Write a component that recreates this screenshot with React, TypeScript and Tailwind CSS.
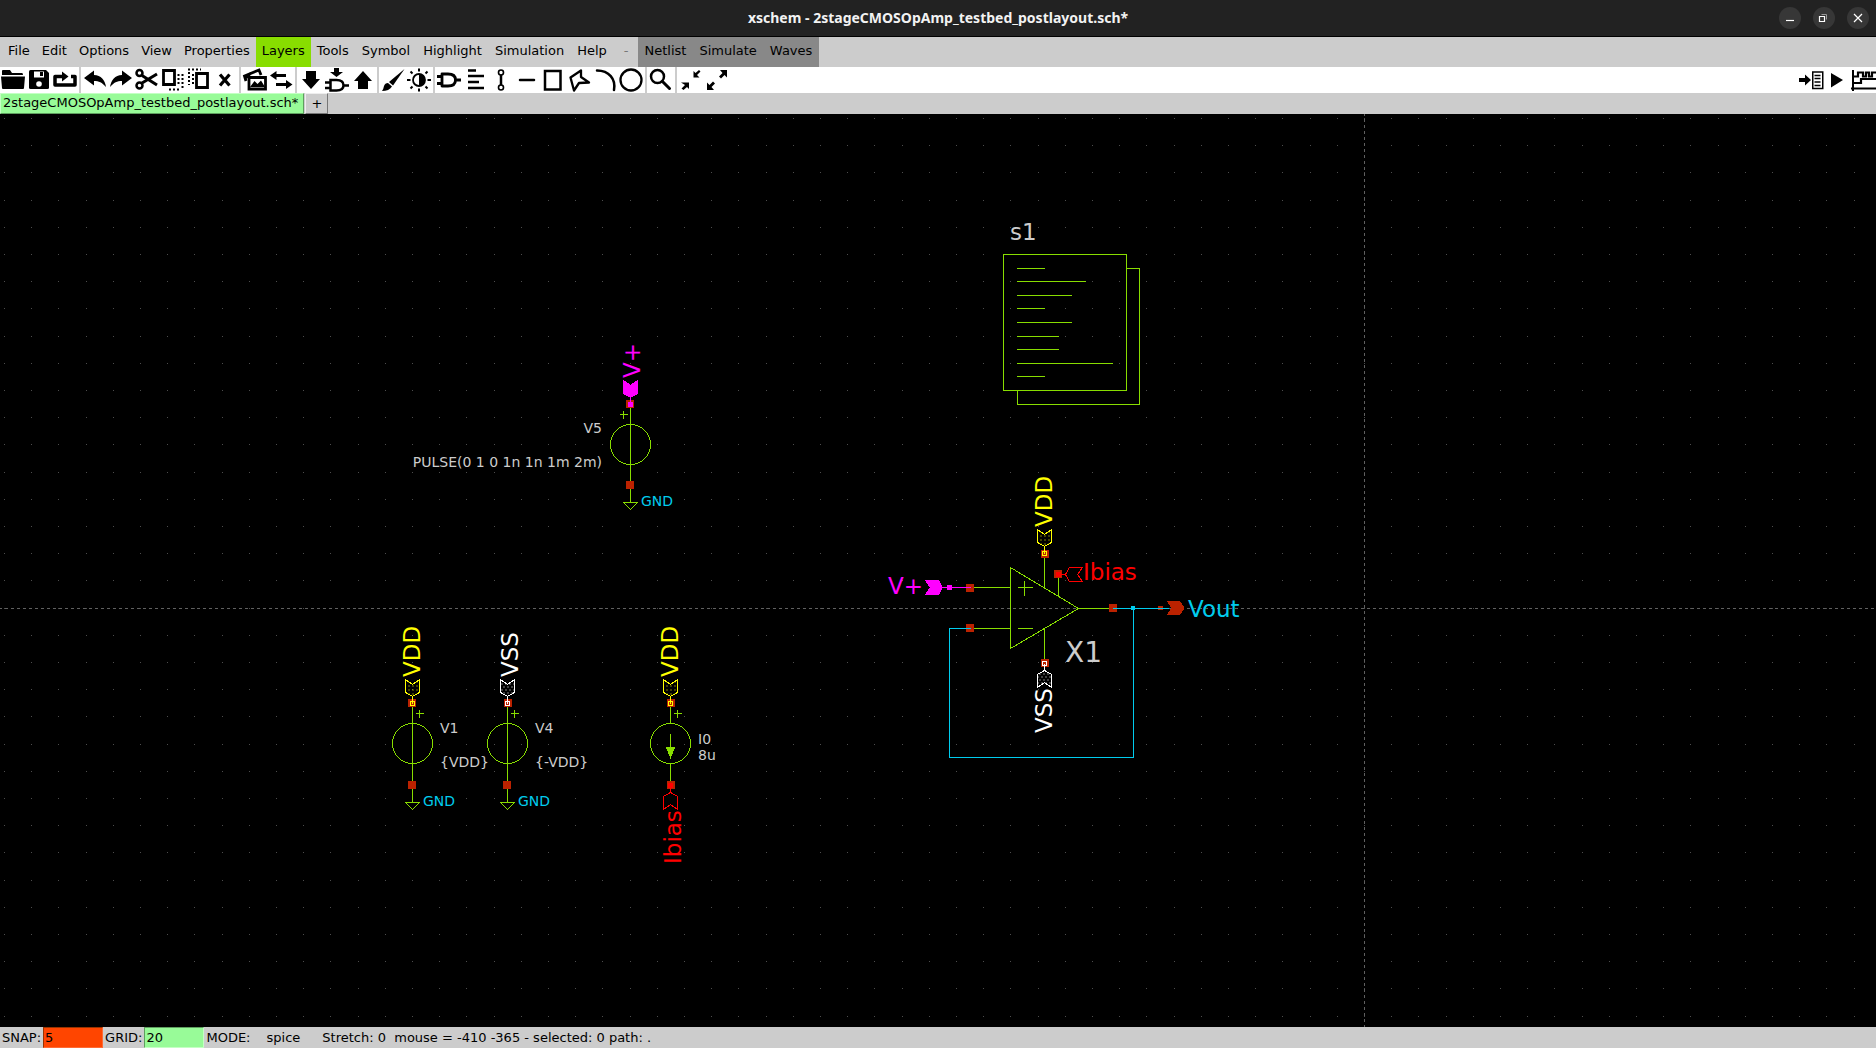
import React from "react";

const GREEN = "#88dd00";
const CYAN = "#00ccee";
const PIN = "#bb2200";
const MAGENTA = "#ff00ff";
const YELLOW = "#ffff00";
const TEXT = "#cccccc";

function Icon({ label, children }: { label: string; children: React.ReactNode }) {
  return (
    <button type="button" aria-label={label} className="h-[26px] w-[26px] shrink-0">
      <svg width="26" height="26" viewBox="0 0 26 26" fill="none" stroke="#000" strokeWidth="2.5">
        {children}
      </svg>
    </button>
  );
}

function Group({ children }: { children: React.ReactNode }) {
  return <div className="flex shrink-0 bg-white pr-px pl-px">{children}</div>;
}

const solid = { fill: "#000", stroke: "none" };

function Toolbar() {
  return (
    <div className="flex h-[26px] gap-0.5 overflow-hidden bg-[#cccccc]">
      <div className="flex shrink-0 bg-white pr-px">
        <Icon label="Open">
          <path {...solid} d="M2 8V4q0-1 1-1h7l2 3h10q1 0 1 2z M1 9.500h24l-1 11.500q0 1-1 1H3q-1 0-1-1z" />
        </Icon>
        <Icon label="Save">
          <path {...solid} d="M3 4.500Q3 3 4.500 3H20l3 3v14.500q0 1.500-1.500 1.500h-17Q3 22 3 20.500z" />
          <path fill="#fff" stroke="none" d="M8 4.500h10v6H8z" />
          <path {...solid} d="M14 5h3v4h-3z" />
          <circle cx="13" cy="17" r="2.800" fill="#fff" stroke="none" />
        </Icon>
        <Icon label="Reload">
          <path strokeWidth="3.500" strokeLinejoin="round" d="M12 9.500H3V18H23V9.500H19" />
          <path {...solid} d="M10 4.500L16.500 9.500L10 14.500z" />
        </Icon>
      </div>
      <Group>
        <Icon label="Undo">
          <path {...solid} d="M2 11L12 3.500V8C19 8 23 13 24 20C20 15.500 17 14 12 14v4.500z" />
        </Icon>
        <Icon label="Redo">
          <path {...solid} d="M24 11L14 3.500V8C7 8 3 13 2 20C6 15.500 9 14 14 14v4.500z" />
        </Icon>
        <Icon label="Cut">
          <circle cx="5.500" cy="6" r="3" />
          <circle cx="5.500" cy="18.500" r="3" />
          <path strokeWidth="3" d="M8 8.500L23 18M8 16L23 7" />
        </Icon>
        <Icon label="Copy">
          <path strokeWidth="2.800" d="M3.500 3.500h11v14h-11z" />
          <path strokeWidth="2" strokeDasharray="2 2" d="M18.500 7v11M22.500 7v16M9 22.500h12" />
        </Icon>
        <Icon label="Paste">
          <path strokeWidth="2.800" d="M10.500 6.500h11v14h-11z" />
          <path strokeWidth="2" strokeDasharray="2 2" d="M2 2.500h13M3 5v13M7 7v11" />
        </Icon>
        <Icon label="Delete">
          <path strokeWidth="3.200" d="M8 7.500l9.500 11M17.500 7.500L8 18.500" />
        </Icon>
      </Group>
      <Group>
        <Icon label="Merge">
          <path strokeWidth="2.800" d="M7 10.500h16.500v11.500H7z" />
          <path {...solid} d="M8 20l4.500-6 3 3 3.500-3.500L23 20z" />
          <path strokeWidth="2.800" d="M4 14L2.500 9L17 3L19 8" />
          <path {...solid} d="M2 9L9 5L8 10L4 12z" />
        </Icon>
        <Icon label="Swap">
          <path strokeWidth="3" d="M7 8.500h11M8 17.500h12" />
          <path {...solid} d="M2 8.500L8.500 4v9zM24.500 17.500L18 13v9z" />
        </Icon>
      </Group>
      <Group>
        <Icon label="Descend">
          <path {...solid} d="M8 4h10v8h4l-9 10-9-10h4z" />
        </Icon>
        <Icon label="Descend symbol">
          <path {...solid} d="M10 1h5v4h4l-6.500 5L6 5h4z" />
          <path strokeWidth="2.500" d="M6.500 13v10.500h6q7 0 7-5.250t-7-5.250zM1 15.500h5M1 21h5M20 18.500h5" />
        </Icon>
        <Icon label="Ascend">
          <path {...solid} d="M8 22h10v-8h4L13 4l-9 10h4z" />
        </Icon>
      </Group>
      <Group>
        <Icon label="Change color">
          <path {...solid} d="M24.500 2L13 18.500L9 15z" />
          <path {...solid} d="M8 16l4 3.500Q9 24 2 24Q3.500 22 4 19Q5 16 8 16z" />
        </Icon>
        <Icon label="Brightness">
          <circle cx="13" cy="13" r="6" strokeWidth="1.800" />
          <path {...solid} d="M13 7a6 6 0 0 1 0 12z" />
          <path
            strokeWidth="2"
            d="M13 1.500v3M13 21.500v3M1 13h3.500M21.500 13H25M4.500 4.500l2 2M19.500 19.500l2 2M4.500 21.500l2-2M19.500 6.500l2-2"
          />
        </Icon>
      </Group>
      <Group>
        <Icon label="Insert symbol">
          <path strokeWidth="2.800" strokeLinejoin="round" d="M6 7v12h6q7.500 0 7.500-6t-7.500-6zM1 9.500h5M1 16.500h5M20 13h5" />
        </Icon>
        <Icon label="Insert text">
          <path strokeWidth="2.500" d="M6 3.500h8M6 9h16M6 15h11M6 21h16" />
        </Icon>
        <Icon label="Insert wire">
          <circle cx="13" cy="5.500" r="2.500" strokeWidth="1.600" />
          <circle cx="13" cy="20.500" r="2.500" strokeWidth="1.600" />
          <path strokeWidth="2.500" d="M13 8v10" />
        </Icon>
        <Icon label="Insert line">
          <path strokeWidth="2.500" d="M6 13h14" strokeLinecap="round" />
        </Icon>
        <Icon label="Insert rectangle">
          <path strokeWidth="2.500" d="M5 4h15.500v18.500H5z" />
        </Icon>
        <Icon label="Insert polygon">
          <path strokeWidth="2.300" strokeLinejoin="round" d="M4.500 10.500L15 3.500L15 10L23 15.500L13 16L8 23.500z" />
        </Icon>
        <Icon label="Insert arc">
          <path strokeWidth="2.500" strokeLinecap="round" d="M5 3.500C17 3.500 24 12 22 23" />
        </Icon>
        <Icon label="Insert circle">
          <circle cx="13" cy="13" r="10.500" strokeWidth="2.300" />
        </Icon>
      </Group>
      <Group>
        <Icon label="Zoom box">
          <circle cx="9.500" cy="9.500" r="6.500" />
          <path strokeWidth="3" strokeLinecap="round" d="M14.500 14.500l7 7" />
        </Icon>
      </Group>
      <div className="flex grow justify-between bg-white pl-px">
        <div className="flex">
          <Icon label="Zoom in">
            <path {...solid} d="M15.500 10.500V4l2 2 3.500-3 1.500 1.500-3.500 3.500 2.500 2.500zM3 15.500h8V22l-2-2-3.500 3L3.500 21.500 7 18z" />
          </Icon>
          <Icon label="Zoom full">
            <path {...solid} d="M23 3v7.500l-2.500-2.500L17 11.500 15 9.500 18.500 6l-2.500-3zM3 23v-7.500l2.500 2.500L9 14.500l2 2L7.500 20l2.500 3z" />
          </Icon>
        </div>
        <div className="flex">
          <Icon label="Netlist">
            <path {...solid} d="M1 11h6V7.500l6 5.500-6 5.500V15H1z" />
            <path strokeWidth="1.500" d="M14.750 5h10v16.500h-10z" />
            <path strokeWidth="1.500" d="M16.500 8.500h6M16.500 11.500h6M16.500 15h6M16.500 18.500h6" />
          </Icon>
          <Icon label="Simulate">
            <path {...solid} d="M7 6l12 7-12 7.500z" />
          </Icon>
          <Icon label="Waves">
            <path strokeWidth="2" d="M3 3v21M1 21.500h25" />
            <path strokeWidth="2.200" d="M3 9.500h5V5.500h5v4h3V5.500h3v4h3V5.500h4M3 16h8v-4h15" />
          </Icon>
        </div>
      </div>
    </div>
  );
}

const leftMenus = ["File", "Edit", "Options", "View", "Properties", "Layers"];
const midMenus = ["Tools", "Symbol", "Highlight", "Simulation", "Help"];
const runMenus = ["Netlist", "Simulate", "Waves"];

/* Grid dots snapped to whole pixels */
const dots = (() => {
  let d = "";
  for (let i = 0; i < 140; i++)
    for (let j = 0; j < 70; j++) d += `M${Math.round(4 + 27.2 * i)} ${Math.round(118 + 27.2 * j)}h1v1h-1z`;
  return d;
})();

function Pin({ x, y }: { x: number; y: number }) {
  return <rect x={x - 4.5} y={y - 4.5} width="8" height="8" fill={PIN} />;
}

/* Net label flag whose connection point is at the origin, body extending upwards */
function Flag({ x, y, rot = 0, color, kind }: { x: number; y: number; rot?: number; color: string; kind: "solid" | "dots" | "open" }) {
  return (
    <g transform={`translate(${x} ${y}) rotate(${rot})`}>
      <path
        d="M0 -7L7 -11V-24L0 -19L-7 -24V-11z"
        fill={kind === "solid" ? color : kind === "dots" ? `url(#hatch-${color.slice(1)})` : "none"}
        stroke={color}
      />
      <path d="M0 0V-7" stroke={color} />
      {kind === "dots" ? (
        <rect x="-2" y="-2" width="4" height="4" fill="none" stroke={color} />
      ) : (
        <rect x="-2.5" y="-2.5" width="5" height="5" fill={color} />
      )}
    </g>
  );
}

function Ground({ x, y }: { x: number; y: number }) {
  return (
    <g>
      <path d={`M${x} ${y}v17M${x - 7} ${y + 17}h14l-7 7z`} stroke={GREEN} fill="none" />
      <Pin x={x} y={y} />
      <Label x={x + 11} y={y + 21} size={14} color={CYAN}>
        GND
      </Label>
    </g>
  );
}

function Source({ x, y, plus, current }: { x: number; y: number; plus: number; current?: boolean }) {
  return (
    <g stroke={GREEN} fill="none">
      <circle cx={x} cy={y} r="20" />
      {current ? (
        <>
          <path d={`M${x} ${y - 41}v21M${x} ${y + 20}v21M${x} ${y - 10}v14`} />
          <path d={`M${x - 4} ${y + 4}h8l-4 10z`} fill={GREEN} />
        </>
      ) : (
        <path d={`M${x} ${y - 41}v82`} />
      )}
      <path d={`M${x + plus - 4} ${y - 30}h8M${x + plus} ${y - 34}v8`} />
    </g>
  );
}

/* Text is placed on whole pixels, half a pixel off the stroke raster */
function Label({
  x,
  y,
  up,
  end,
  color,
  size = 23,
  children,
}: {
  x: number;
  y: number;
  up?: boolean;
  end?: boolean;
  color: string;
  size?: number;
  children: string;
}) {
  return (
    <text
      transform={`translate(${x - 0.5} ${y - 0.5}) rotate(${up ? -90 : 0})`}
      fontSize={size}
      fill={color}
      textAnchor={end ? "end" : "start"}
    >
      {children}
    </text>
  );
}

const scriptLines = [
  [268, 28], [281, 69], [295, 55], [308, 28], [322, 55], [336, 42], [349, 42], [363, 96], [376, 28],
];

function Schematic() {
  return (
    <svg
      className="block h-full w-full"
      role="img"
      aria-label="Schematic"
      fontFamily='"DejaVu Sans", sans-serif'
      shapeRendering="crispEdges"
    >
      <defs>
        <pattern id="hatch-ffff00" width="4" height="4" patternUnits="userSpaceOnUse">
          <path d="M0 2h1v1h-1z" fill={YELLOW} />
        </pattern>
        <pattern id="hatch-ffffff" width="4" height="6" patternUnits="userSpaceOnUse">
          <path d="M0 1h1v1h-1zM2 4h1v1h-1z" fill="#fff" />
        </pattern>
      </defs>
      <g transform="translate(0 -114)">
        <path d={dots} fill="#4d4d4d" />
        <path d="M-1 608.5H4000M1364.5 113V4000" stroke="#606060" strokeDasharray="3 3" fill="none" />
        <g transform="translate(.5 .5)">
          <g stroke={GREEN} fill="none">
            <path d="M1003 254h123v136h-123zM1126 268h13v136H1017v-14" />
            {scriptLines.map(([y, w]) => (
              <path key={y} d={`M1016 ${y}h${w}`} />
            ))}
          </g>
          <Label x={1010} y={240} color={TEXT}>s1</Label>

          <Source x={630} y={444} plus={-7} />
          <Pin x={630} y={404} />
          <Flag x={630} y={404} color={MAGENTA} kind="solid" />
          <Ground x={630} y={485} />
          <Label x={640} y={378} up color={MAGENTA}>V+</Label>
          <Label x={602} y={433} size={14} end color={TEXT}>V5</Label>
          <Label x={602} y={467} size={14} end color={TEXT}>PULSE(0 1 0 1n 1n 1m 2m)</Label>

          <Source x={412} y={743} plus={7} />
          <Pin x={412} y={703} />
          <Flag x={412} y={703} color={YELLOW} kind="dots" />
          <Ground x={412} y={785} />
          <Label x={420} y={677} up color={YELLOW}>VDD</Label>
          <Label x={440} y={733} size={14} color={TEXT}>V1</Label>
          <Label x={440} y={767} size={14} color={TEXT}>{"{VDD}"}</Label>

          <Source x={507} y={743} plus={7} />
          <Pin x={508} y={703} />
          <Flag x={507} y={703} color="#ffffff" kind="dots" />
          <Ground x={507} y={785} />
          <Label x={518} y={677} up color="#ffffff">VSS</Label>
          <Label x={535} y={733} size={14} color={TEXT}>V4</Label>
          <Label x={535} y={767} size={14} color={TEXT}>{"{-VDD}"}</Label>

          <Source x={670} y={743} plus={7} current />
          <Pin x={671} y={703} />
          <Flag x={670} y={703} color={YELLOW} kind="dots" />
          <Pin x={671} y={785} />
          <Flag x={670} y={785} rot={180} color="#ff0000" kind="open" />
          <Label x={678} y={677} up color={YELLOW}>VDD</Label>
          <Label x={681} y={864} up color="#ff0000">Ibias</Label>
          <Label x={698} y={744} size={14} color={TEXT}>I0</Label>
          <Label x={698} y={760} size={14} color={TEXT}>8u</Label>

          <g stroke={GREEN} fill="none">
            <path d="M1010 567V648L1078 608zM970 587h40M970 628h40M1078 608h35" />
            <path d="M1044 554v34M1044 628v34M1058 574v21" />
            <path d="M1017 587h15M1024 580v15M1017 628h15" />
          </g>
          <Pin x={970} y={588} />
          <Pin x={970} y={628} />
          <Pin x={1113} y={608} />
          <Pin x={1045} y={554} />
          <Pin x={1058} y={574} />
          <Pin x={1045} y={663} />
          <rect x="1157.5" y="605.5" width="5" height="4" fill={PIN} />
          <path d="M970 628H949V757H1133V608M1112 608H1168" stroke={CYAN} fill="none" />
          <rect x="1130.5" y="605.5" width="4" height="4" fill={CYAN} />
          <path d="M1166.500 600.500H1179.500L1184 607.500L1179.500 614.500H1166.500L1170.500 607.500z" fill={PIN} />
          <path d="M949 587H970" stroke={MAGENTA} />
          <Flag x={949} y={587} rot={-90} color={MAGENTA} kind="solid" />
          <Flag x={1044} y={553} color={YELLOW} kind="dots" />
          <Flag x={1044} y={663} rot={180} color="#ffffff" kind="dots" />
          <Flag x={1058} y={574} rot={90} color="#ff0000" kind="open" />
          <Label x={1052} y={527} up color={YELLOW}>VDD</Label>
          <Label x={1052} y={733} up color="#ffffff">VSS</Label>
          <Label x={1083} y={580} color="#ff0000">Ibias</Label>
          <Label x={888} y={594} color={MAGENTA}>V+</Label>
          <Label x={1188} y={617} color={CYAN}>Vout</Label>
          <Label x={1065} y={662} size={28} color={TEXT}>X1</Label>
        </g>
      </g>
    </svg>
  );
}

function WindowButton({ label, children }: { label: string; children: React.ReactNode }) {
  return (
    <button type="button" aria-label={label} className="flex size-[22px] items-center justify-center rounded-full bg-[#373737]">
      <svg width="12" height="12" viewBox="0 0 12 12" fill="none" stroke="#fff" strokeWidth="1.200">
        {children}
      </svg>
    </button>
  );
}

export default function App() {
  return (
    <div className="flex h-screen flex-col bg-black font-['DejaVu_Sans',sans-serif] text-[13px] text-black">
      <header className="grid h-[37px] shrink-0 grid-cols-[1fr_auto_1fr] items-center border-b border-black bg-[#222222]">
        <h1 className="col-start-2 font-['Noto_Sans','Open_Sans',sans-serif] text-sm font-bold text-[#f2f2f2]">
          xschem - 2stageCMOSOpAmp_testbed_postlayout.sch*
        </h1>
        <div className="flex justify-end gap-3 pr-[7px]">
          <WindowButton label="Minimize">
            <path d="M2 8.500h8" />
          </WindowButton>
          <WindowButton label="Restore">
            <path d="M1.500 4.500h5v5h-5z" />
            <path d="M3.500 2.500h5v5" stroke="#999" strokeWidth="1" />
          </WindowButton>
          <WindowButton label="Close">
            <path d="M2 2l8 8M10 2l-8 8" />
          </WindowButton>
        </div>
      </header>
      <nav className="flex h-[30px] shrink-0 bg-[#cccccc] pl-0.5">
        {leftMenus.map((m) => (
          <button key={m} type="button" className={m === "Layers" ? "bg-[#88dd00] px-1.5 pb-0.5" : "px-1.5 pb-0.5"}>
            {m}
          </button>
        ))}
        {midMenus.map((m) => (
          <button key={m} type="button" className="pr-[7px] pb-0.5 pl-1.5">
            {m}
          </button>
        ))}
        <button type="button" disabled className="px-2.5 pb-0.5 text-[#777777]">
          -
        </button>
        <div className="flex bg-[#888888]">
          {runMenus.map((m) => (
            <button key={m} type="button" className="pr-[7px] pb-0.5 pl-1.5">
              {m}
            </button>
          ))}
        </div>
      </nav>
      <Toolbar />
      <div className="flex h-[21px] shrink-0 bg-[#cccccc]">
        <button type="button" className="border border-t-[#c4ffc4] border-r-[#5f9f5f] border-b-[#5f9f5f] border-l-[#c4ffc4] bg-[#98fb98] pr-[5px] pb-0.5 pl-0.5 leading-4">
          2stageCMOSOpAmp_testbed_postlayout.sch*
        </button>
        <button type="button" className="ml-px w-[23px] border border-t-[#eeeeee] border-r-[#777777] border-b-[#777777] border-l-[#eeeeee] leading-4">
          +
        </button>
      </div>
      <main className="min-h-0 flex-1 overflow-hidden bg-black">
        <Schematic />
      </main>
      <footer className="flex h-[21px] shrink-0 items-center bg-[#cccccc] whitespace-pre">
        <label htmlFor="snap" className="pr-0.5 pl-0.5">SNAP:</label>
        <input
          id="snap"
          defaultValue="5"
          className="h-full w-[60px] border border-t-[#993300] border-r-[#ff6a33] border-b-[#ff6a33] border-l-[#993300] bg-[#ff4500] pl-px outline-none"
        />
        <label htmlFor="grid" className="pr-0.5 pl-0.5">GRID:</label>
        <input
          id="grid"
          defaultValue="20"
          className="h-full w-[60px] border border-t-[#5f9f5f] border-r-[#c4ffc4] border-b-[#c4ffc4] border-l-[#5f9f5f] bg-[#98fb98] pl-px outline-none"
        />
        <span className="pl-0.5">MODE:</span>
        <span className="pl-4">spice</span>
        <span className="pl-[22px]">Stretch: 0  mouse = -410 -365 - selected: 0 path: .</span>
      </footer>
    </div>
  );
}
